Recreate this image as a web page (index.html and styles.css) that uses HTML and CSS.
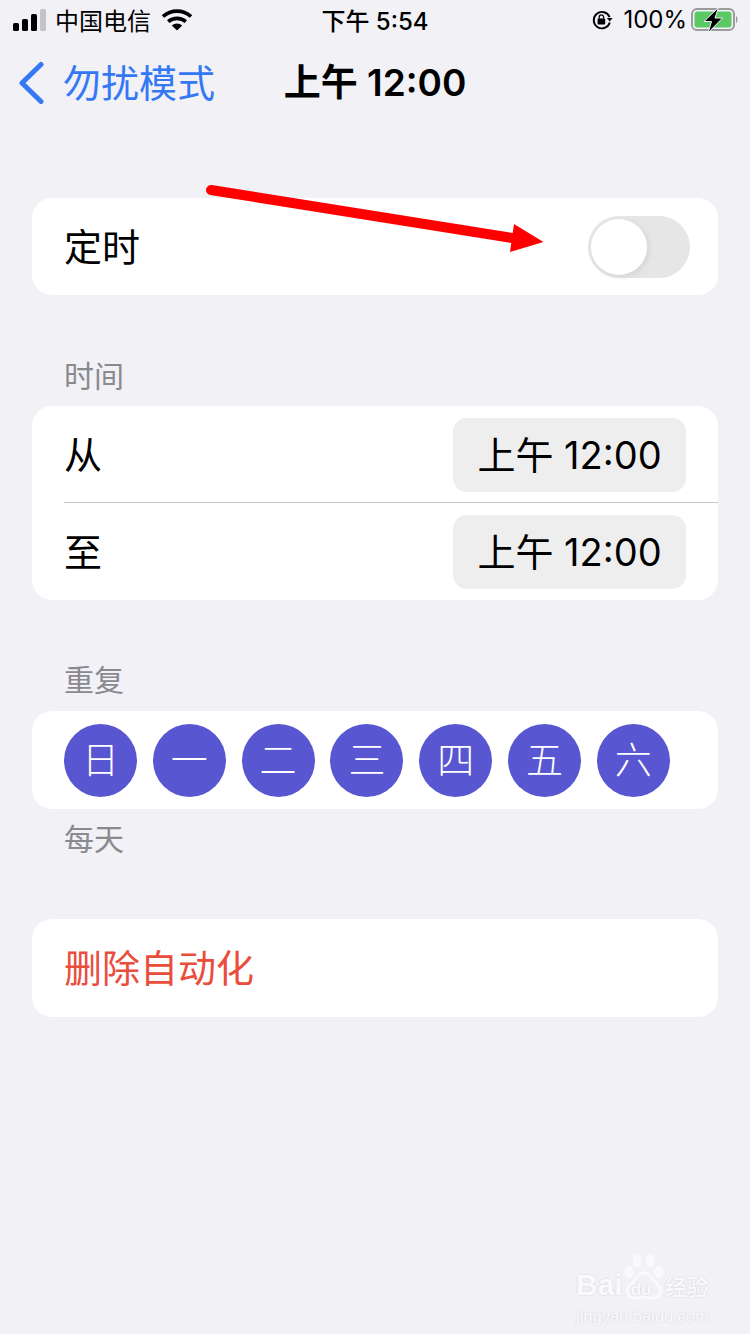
FILE: index.html
```html
<!DOCTYPE html>
<html lang="zh-CN">
<head>
  <meta charset="UTF-8" />
  <title>上午 12:00</title>
  <link rel="stylesheet" href="styles.css">
</head>
<body>
  <div class="page">

    <div class="status">
      <div class="status-left">
        <svg class="signal" width="34" height="22" viewBox="0 0 34 22">
          <rect x="0" y="14" width="6" height="8" rx="1.5" fill="#000"/>
          <rect x="9" y="10" width="6" height="12" rx="1.5" fill="#000"/>
          <rect x="18" y="5" width="6" height="17" rx="1.5" fill="#000"/>
          <rect x="27" y="0" width="6" height="22" rx="1.5" fill="#c4c4c8"/>
        </svg>
        <span class="carrier">中国电信</span>
        <svg class="wifi" width="30" height="22" viewBox="0 0 30 22">
          <path d="M1 7.5 A21 21 0 0 1 29 7.5" fill="none" stroke="#000" stroke-width="3.6"/>
          <path d="M6.2 12.6 A13.5 13.5 0 0 1 23.8 12.6" fill="none" stroke="#000" stroke-width="3.6"/>
          <path d="M9.8 16.4 A8 8 0 0 1 20.2 16.4 L15 21.5 Z" fill="#000"/>
        </svg>
      </div>
      <div class="status-time">下午 5:54</div>
      <div class="status-right">
        <svg class="lock" width="22" height="22" viewBox="0 0 22 22">
          <path d="M18.6 8.2 A8.2 8.2 0 1 0 18.8 13.5" fill="none" stroke="#000" stroke-width="1.9"/>
          <path d="M15.8 9 L21.6 9 L18.7 12.6 Z" fill="#000"/>
          <rect x="6.6" y="9.6" width="7.6" height="6" rx="1" fill="#000"/>
          <path d="M8.2 9.8 V8 A2.2 2.2 0 0 1 12.6 8 V9.8" fill="none" stroke="#000" stroke-width="1.3"/>
        </svg>
        <span class="battery-pct">100%</span>
        <svg class="battery" width="48" height="26" viewBox="0 0 48 26">
          <rect x="1" y="2" width="42" height="21" rx="5" fill="none" stroke="#9b9b9b" stroke-width="2"/>
          <rect x="3.5" y="4.5" width="37" height="16" rx="3" fill="#5ac864"/>
          <path d="M45 9 C47 10 47 15 45 16 Z" fill="#9b9b9b"/>
          <path d="M27.5 0.5 L13 14.5 H20.500 L17 26 L31.500 11 H24 Z" fill="#000" stroke="#f1f1f6" stroke-width="1"/>
        </svg>
      </div>
    </div>

    <div class="nav">
      <div class="nav-back">
        <svg width="28" height="44" viewBox="0 0 28 44">
          <path d="M24 4.500 L5 23 L24 41.500" fill="none" stroke="#3478f6" stroke-width="5" stroke-linecap="round" stroke-linejoin="round"/>
        </svg>
        <span>勿扰模式</span>
      </div>
      <div class="nav-title">上午 12:00</div>
      <div></div>
    </div>

    <div class="card row first-card">
      <span class="row-label">定时</span>
      <div class="switch"><div class="knob"></div></div>
    </div>

    <div class="section-label">时间</div>
    <div class="card">
      <div class="row row-line">
        <span class="row-label">从</span>
        <span class="time-btn">上午 12:00</span>
      </div>
      <div class="row">
        <span class="row-label">至</span>
        <span class="time-btn">上午 12:00</span>
      </div>
    </div>

    <div class="section-label repeat-label">重复</div>
    <div class="card days">
      <span class="day">日</span>
      <span class="day">一</span>
      <span class="day">二</span>
      <span class="day">三</span>
      <span class="day">四</span>
      <span class="day">五</span>
      <span class="day">六</span>
    </div>
    <div class="section-note">每天</div>

    <div class="card row delete-card">
      <span class="delete">删除自动化</span>
    </div>

    <!-- red arrow drawn over the screenshot -->
    <svg class="arrow" width="350" height="80" viewBox="0 0 350 80">
      <path d="M11 6 L312 54" fill="none" stroke="#ff0000" stroke-width="10" stroke-linecap="round"/>
      <path d="M314 40 L343.500 58 L310 68 Z" fill="#ff0000"/>
    </svg>

    <div class="watermark">
      <svg class="paw" width="44" height="50" viewBox="0 0 44 50">
        <ellipse cx="7" cy="19" rx="4.500" ry="6" fill="#fafafc"/>
        <ellipse cx="15" cy="8" rx="4.500" ry="6.500" fill="#fafafc"/>
        <ellipse cx="28" cy="8" rx="4.500" ry="6.500" fill="#fafafc"/>
        <ellipse cx="37" cy="19" rx="4.500" ry="6" fill="#fafafc"/>
        <path d="M22 20 C15 20 14 27 8 32 C3 37 6 45 13 45 C17 45 19 44 22 44 C25 44 27 45 31 45 C38 45 41 37 36 32 C30 27 29 20 22 20 Z" fill="#f1f1f6" stroke="#fafafc" stroke-width="3"/>
      </svg>
      <div class="wm-top"><span>Bai</span><span class="wm-du">du</span><span class="wm-cn">经验</span></div>
      <div class="wm-url">jingyan.baidu.com</div>
    </div>
  </div>
</body>
</html>
```

FILE: styles.css
```css
* {
  box-sizing: border-box;
}
body {
  margin: 0;
  font-family: Inter, "Noto Sans CJK SC", sans-serif;
  background: #f1f1f6;
  color: #000;
}
.page {
  position: relative;
  width: 750px;
  height: 1334px;
  overflow: hidden;
  padding: 0 32px;
}

/* status bar */
.status {
  display: grid;
  grid-template-columns: 1fr auto 1fr;
  align-items: center;
  height: 40px;
  margin: 0 -32px;
  font-size: 24px;
}
.status-left {
  display: flex;
  align-items: center;
  padding-left: 13px;
}
.carrier {
  margin-left: 8px;
  padding-bottom: 2px;
  font-size: 24px;
}
.wifi {
  margin-left: 11px;
}
.status-time {
  padding-bottom: 2px;
  font-weight: 500;
}
.status-right {
  display: flex;
  align-items: center;
  justify-content: flex-end;
  padding-right: 11px;
}
.battery-pct {
  margin: 0 4px 0 10px;
  padding-bottom: 2px;
}

/* nav bar */
.nav {
  display: grid;
  grid-template-columns: 1fr auto 1fr;
  align-items: center;
  height: 86px;
  margin: 0 -32px;
  padding-bottom: 2px;
}
.nav-back {
  display: flex;
  align-items: center;
  padding-left: 17px;
  color: #3478f6;
  font-size: 38px;
}
.nav-back span {
  margin-left: 18px;
  padding-bottom: 4px;
}
.nav-title {
  padding-bottom: 4px;
  font-size: 37px;
  font-weight: 600;
}

/* cards */
.card {
  background: #fff;
  border-radius: 20px;
  overflow: hidden;
}
.row {
  display: flex;
  align-items: center;
  justify-content: space-between;
  height: 97px;
  padding: 0 32px;
}
.card .row {
  position: relative;
}
.row-line::after {
  content: "";
  position: absolute;
  left: 32px;
  right: 0;
  bottom: 0;
  height: 1px;
  background: #c6c6c8;
}
.first-card {
  margin-top: 72px;
  padding-right: 28px;
}
.row-label {
  padding-bottom: 4px;
  font-size: 38px;
}
.section-label,
.section-note {
  padding-left: 32px;
  color: #8a8a8e;
  font-size: 30px;
  line-height: 40px;
}
.section-label {
  margin-top: 61px;
  margin-bottom: 10px;
}
.repeat-label {
  margin-top: 60px;
  margin-bottom: 11px;
}
.section-note {
  margin-top: 10px;
}

/* toggle */
.switch {
  width: 102px;
  height: 62px;
  padding: 3px;
  border-radius: 31px;
  background: #e6e6e6;
}
.knob {
  width: 56px;
  height: 56px;
  border-radius: 50%;
  background: #fff;
  box-shadow: 2px 2px 6px rgba(0, 0, 0, 0.08);
}

/* time picker pill */
.time-btn {
  display: flex;
  align-items: center;
  justify-content: center;
  width: 233px;
  height: 74px;
  padding-bottom: 4px;
  border-radius: 14px;
  background: #eeeeef;
  font-size: 38px;
}
.card .row:has(.time-btn) {
  padding-right: 32px;
}

/* week days */
.days {
  display: flex;
  align-items: center;
  gap: 15.800px;
  height: 98px;
  padding: 0 32px;
}
.day {
  display: flex;
  align-items: center;
  justify-content: center;
  width: 73px;
  height: 73px;
  padding-bottom: 4px;
  border-radius: 50%;
  background: #5856d0;
  color: #fff;
  font-size: 37px;
  font-weight: 300;
}

.delete-card {
  margin-top: 60px;
  height: 98px;
}
.delete {
  padding-bottom: 6px;
  color: #eb4d3d;
  font-size: 38px;
}

/* overlays */
.arrow {
  position: absolute;
  left: 200px;
  top: 184px;
}
.watermark {
  position: absolute;
  left: 576px;
  top: 1253px;
  width: 140px;
  color: #fafafc;
  text-shadow: 0 0 2px #cfcfd6;
}
.paw {
  position: absolute;
  left: 46px;
  top: 0;
}
.wm-top {
  position: relative;
  display: flex;
  align-items: baseline;
  margin-top: 16px;
  font-family: "Liberation Sans", sans-serif;
  font-size: 30px;
  font-weight: 700;
  line-height: 32px;
}
.wm-du {
  width: 42px;
  padding-left: 8px;
  font-size: 17px;
}
.wm-cn {
  font-family: "Noto Sans CJK SC", sans-serif;
  font-size: 22px;
  font-weight: 500;
}
.wm-url {
  font-family: "Liberation Sans", sans-serif;
  font-size: 16.500px;
  line-height: 20px;
}
```
